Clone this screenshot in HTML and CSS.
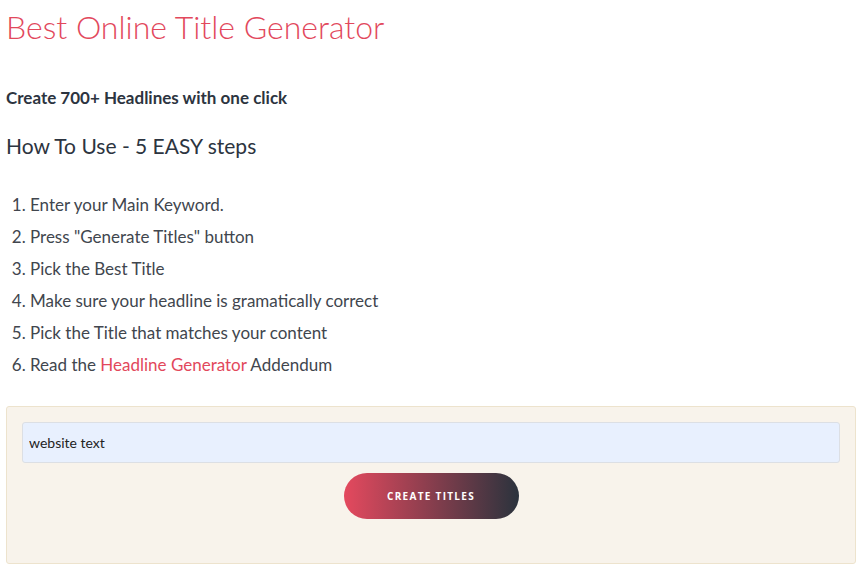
FILE: index.html
```html
<!DOCTYPE html>
<html lang="en">

<head>
    <meta charset="UTF-8">
    <meta name="viewport" content="width=device-width, initial-scale=1.0">
    <title>Best Online Title Generator</title>
    <link rel="stylesheet" href="styles.css">
</head>

<body>

    <div class="wrap">
        <h1 class="title">Best Online Title Generator</h1>
        <p class="lead">Create 700+ Headlines with one click</p>
        <h2 class="subtitle">How To Use - 5 EASY steps</h2>
        <ol class="steps">
            <li>Enter your Main Keyword.</li>
            <li>Press "Generate Titles" button</li>
            <li>Pick the Best Title</li>
            <li>Make sure your headline is gramatically correct</li>
            <li>Pick the Title that matches your content</li>
            <li>Read the <a href="#">Headline Generator</a> Addendum</li>
        </ol>

        <div class="box">
            <input class="keyword" type="text" value="website text">
            <div class="actions">
                <button class="btn" type="button">Create Titles</button>
            </div>
        </div>
    </div>

</body>

</html>
```

FILE: styles.css
```css
body {
    padding: 0;
    margin: 0;
    font-family: Lato, "Open Sans", sans-serif;
    color: #333;
    background: #fff;
}

.wrap {
    padding: 0 7px 0 6px;
}

.title {
    margin: 0;
    padding-top: 8px;
    font-size: 32px;
    line-height: 38px;
    font-weight: 300;
    color: #e2485c;
}

.lead {
    margin: 42px 0 0;
    font-size: 17px;
    line-height: 20px;
    font-weight: 700;
    color: #2c3440;
}

.subtitle {
    margin: 25px 0 0;
    font-size: 21px;
    line-height: 26px;
    font-weight: 400;
    color: #2c3440;
}

.steps {
    margin: 30px 0 0;
    padding-left: 24px;
    font-size: 17px;
    line-height: 32px;
    color: #41464e;
}

.steps a {
    color: #e2485c;
    text-decoration: none;
}

.box {
    margin-top: 25px;
    height: 158px;
    box-sizing: border-box;
    padding: 15px 15px;
    background: #f8f3eb;
    border: 1px solid #ede3cd;
    border-radius: 3px;
}

.keyword {
    display: block;
    width: 100%;
    box-sizing: border-box;
    height: 41px;
    padding: 0 6px;
    font-family: Lato, "Open Sans", sans-serif;
    font-size: 14px;
    color: #222;
    background: #e8f0fe;
    border: 1px solid #dcdfe4;
    border-radius: 3px;
    outline: none;
}

.actions {
    display: flex;
    justify-content: center;
    padding-top: 10px;
}

.btn {
    width: 175px;
    height: 46px;
    border: 0;
    border-radius: 23px;
    background: linear-gradient(to right, #e4495e, #2b333d);
    color: #fff;
    font-family: "Open Sans", sans-serif;
    font-size: 10px;
    font-weight: 700;
    letter-spacing: 1.3px;
    text-transform: uppercase;
    cursor: pointer;
}
```
